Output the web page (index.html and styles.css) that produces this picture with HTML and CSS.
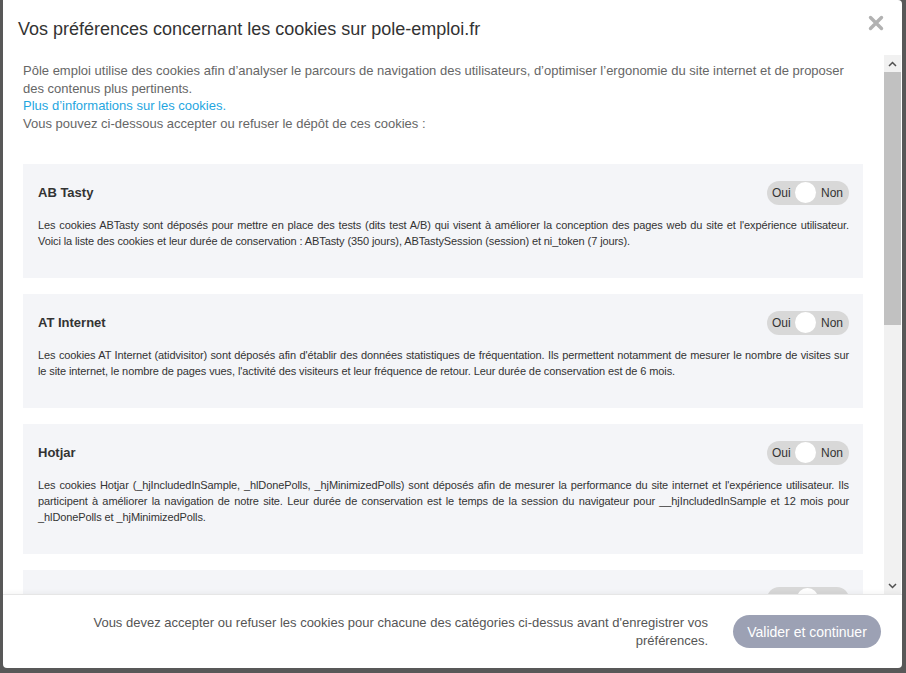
FILE: index.html
```html
<!DOCTYPE html>
<html lang="fr">
<head>
  <meta charset="UTF-8">
  <meta name="viewport" content="width=device-width, initial-scale=1.0">
  <link rel="stylesheet" href="styles.css">
</head>
<body>
  <div class="modal">
    <div class="modal-header">
      <h1>Vos préférences concernant les cookies sur pole-emploi.fr</h1>
      <button class="close-btn" aria-label="Fermer">
        <svg width="16" height="16" viewBox="0 0 16 16"><path d="M2.5 2.5 L13.5 13.5 M13.5 2.5 L2.5 13.5" stroke="#b2b2b2" stroke-width="3.4" stroke-linecap="round"/></svg>
      </button>
    </div>

    <div class="modal-scroll">
      <div class="modal-body">
        <p class="intro">
          Pôle emploi utilise des cookies afin d’analyser le parcours de navigation des utilisateurs, d’optimiser l’ergonomie du site internet et de proposer des contenus plus pertinents.<br>
          <a href="#">Plus d’informations sur les cookies.</a><br>
          Vous pouvez ci-dessous accepter ou refuser le dépôt de ces cookies :
        </p>

        <div class="cookie-card">
          <div class="card-head">
            <h2>AB Tasty</h2>
            <div class="toggle"><span>Oui</span><i class="knob"></i><span>Non</span></div>
          </div>
          <p class="card-text">Les cookies ABTasty sont déposés pour mettre en place des tests (dits test A/B) qui visent à améliorer la conception des pages web du site et l'expérience utilisateur. Voici la liste des cookies et leur durée de conservation : ABTasty (350 jours), ABTastySession (session) et ni_token (7 jours).</p>
        </div>

        <div class="cookie-card">
          <div class="card-head">
            <h2>AT Internet</h2>
            <div class="toggle"><span>Oui</span><i class="knob"></i><span>Non</span></div>
          </div>
          <p class="card-text">Les cookies AT Internet (atidvisitor) sont déposés afin d'établir des données statistiques de fréquentation. Ils permettent notamment de mesurer le nombre de visites sur le site internet, le nombre de pages vues, l'activité des visiteurs et leur fréquence de retour. Leur durée de conservation est de 6 mois.</p>
        </div>

        <div class="cookie-card">
          <div class="card-head">
            <h2>Hotjar</h2>
            <div class="toggle"><span>Oui</span><i class="knob"></i><span>Non</span></div>
          </div>
          <p class="card-text">Les cookies Hotjar (_hjIncludedInSample, _hlDonePolls, _hjMinimizedPolls) sont déposés afin de mesurer la performance du site internet et l'expérience utilisateur. Ils participent à améliorer la navigation de notre site. Leur durée de conservation est le temps de la session du navigateur pour __hjIncludedInSample et 12 mois pour _hlDonePolls et _hjMinimizedPolls.</p>
        </div>

        <div class="cookie-card">
          <div class="card-head">
            <h2></h2>
            <div class="toggle"><i class="knob"></i></div>
          </div>
        </div>
      </div>

      <div class="scrollbar">
        <div class="sb-arrow">
          <svg width="9" height="6" viewBox="0 0 9 6"><path d="M1 5 L4.5 1.5 L8 5" fill="none" stroke="#505050" stroke-width="1.5"/></svg>
        </div>
        <div class="sb-track"><div class="sb-thumb"></div></div>
        <div class="sb-arrow">
          <svg width="9" height="6" viewBox="0 0 9 6"><path d="M1 1 L4.5 4.5 L8 1" fill="none" stroke="#505050" stroke-width="1.5"/></svg>
        </div>
      </div>
    </div>

    <div class="modal-footer">
      <p class="footer-note">Vous devez accepter ou refuser les cookies pour chacune des catégories ci-dessus avant d'enregistrer vos préférences.</p>
      <button class="validate-btn">Valider et continuer</button>
    </div>
  </div>
</body>
</html>
```

FILE: styles.css
```css
* {
  box-sizing: border-box;
}

body {
  margin: 0;
  padding: 0 4px 0 3px;
  height: 673px;
  overflow: hidden;
  background: #585858;
  font-family: "Liberation Sans", Arial, sans-serif;
  color: #333;
}

/* fenêtre modale */
.modal {
  display: flex;
  flex-direction: column;
  height: 668px;
  background: #fff;
  border-radius: 0 4px 4px 4px;
  overflow: hidden;
}

.modal-header {
  display: flex;
  justify-content: space-between;
  align-items: flex-start;
  height: 55px;
  flex: none;
  padding: 18px 18px 0 15px;
}

.modal-header h1 {
  margin: 0;
  font-size: 18px;
  line-height: 22px;
  font-weight: normal;
  color: #333;
}

.close-btn {
  margin-top: -3px;
  padding: 0;
  width: 16px;
  height: 16px;
  border: none;
  background: none;
  cursor: pointer;
  display: flex;
}

/* zone défilante */
.modal-scroll {
  flex: 1;
  display: flex;
  min-height: 0;
}

.modal-body {
  flex: 1;
  overflow: hidden;
  padding: 7px 21px 0 20px;
}

.intro {
  margin: 0 0 31px;
  font-size: 13px;
  line-height: 17.7px;
  color: #666;
}

.intro a {
  color: #1fa6df;
  text-decoration: none;
}

.cookie-card {
  background: #f4f5f8;
  padding: 17px 14px 29px 15px;
  margin-bottom: 16px;
}

.card-head {
  display: flex;
  justify-content: space-between;
  align-items: center;
  height: 24px;
  margin-bottom: 12px;
}

.card-head h2 {
  margin: 0;
  font-size: 13px;
  font-weight: bold;
  color: #333;
}

.toggle {
  display: flex;
  align-items: center;
  height: 24px;
  width: 82px;
  padding: 0 6px 0 5px;
  border-radius: 12px;
  background: #d8d8d8;
  font-size: 12px;
  color: #333;
  justify-content: space-between;
}

.toggle .knob:only-child {
  margin: 0 auto;
}

.knob {
  width: 21px;
  height: 21px;
  border-radius: 50%;
  background: #fff;
}

.card-text {
  margin: 0;
  font-size: 11px;
  line-height: 16px;
  letter-spacing: -0.1px;
  text-align: justify;
  color: #333;
}

/* barre de défilement */
.scrollbar {
  width: 17px;
  margin-right: 1px;
  flex: none;
  display: flex;
  flex-direction: column;
  background: #f1f1f1;
}

.sb-arrow {
  height: 17px;
  display: flex;
  align-items: center;
  justify-content: center;
}

.sb-track {
  flex: 1;
}

.sb-thumb {
  height: 253px;
  background: #c1c1c1;
}

/* pied de page */
.modal-footer {
  flex: none;
  height: 74px;
  display: flex;
  justify-content: flex-end;
  align-items: center;
  gap: 25px;
  padding: 0 21px 0 20px;
  border-top: 1px solid #e6e6e6;
  box-shadow: 0 -2px 4px rgba(0,0,0,0.04);
}

.footer-note {
  margin: 0;
  width: 620px;
  text-align: right;
  font-size: 13px;
  line-height: 18px;
  color: #555;
}

.validate-btn {
  height: 33px;
  width: 148px;
  border: none;
  border-radius: 17px;
  background: #9ca1b4;
  color: #fff;
  font-family: inherit;
  font-size: 14px;
  cursor: pointer;
}
```
